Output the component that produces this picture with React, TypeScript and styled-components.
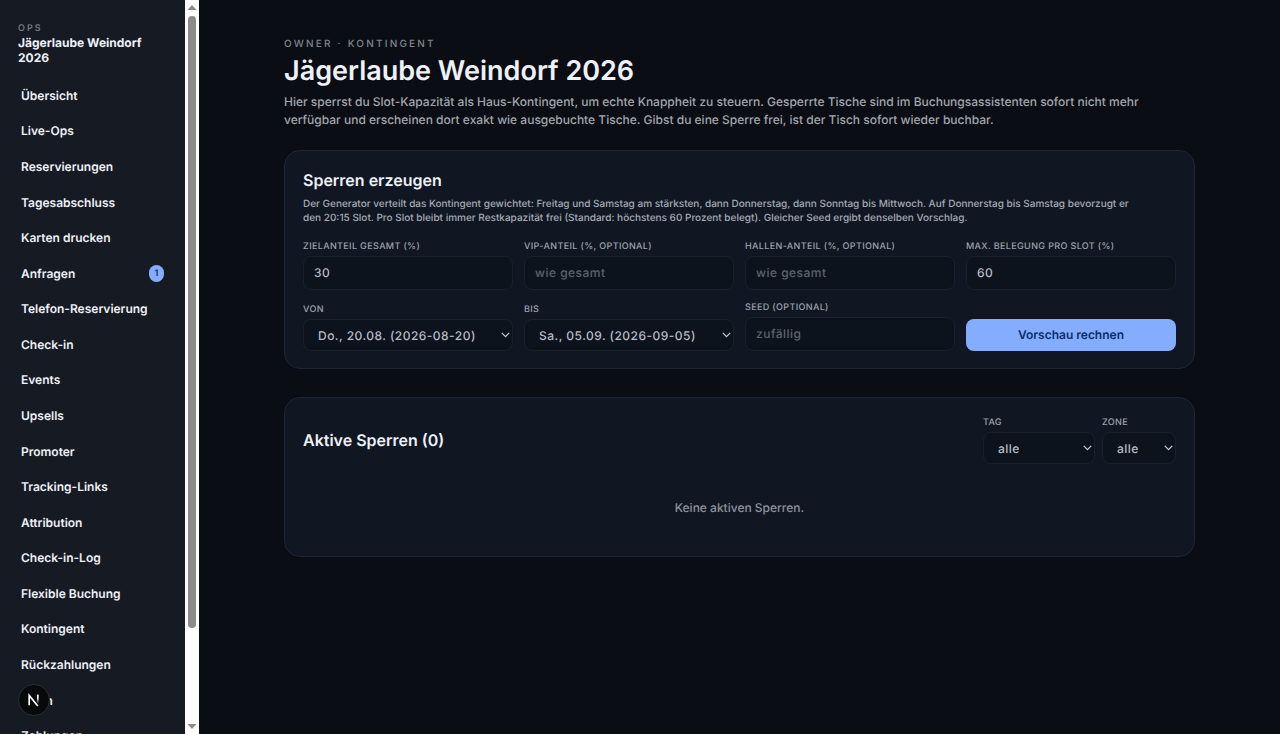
import React, { useId } from "react";
import styled, { createGlobalStyle, css } from "styled-components";

const GlobalStyle = createGlobalStyle`
  *, *::before, *::after { box-sizing: border-box; }
  body {
    margin: 0;
    background: #0a0e14;
    color: #eef1f7;
    font-family: Inter, "Liberation Sans", sans-serif;
    text-rendering: geometricPrecision;
    -webkit-font-smoothing: antialiased;
  }
  h1, h2, p { margin: 0; }
`;

const Shell = styled.div`
  display: flex;
  align-items: flex-start;
  min-height: 100vh;
`;

const SidebarFrame = styled.div`
  position: sticky;
  top: 0;
  display: flex;
  flex: 0 0 199px;
  height: 100vh;
  overflow: hidden;
`;

const Sidebar = styled.aside`
  flex: 1;
  padding: 22px 18px 0;
  background: #161a23;
  overflow: hidden;
`;

const SidebarEyebrow = styled.p`
  font-size: 9px;
  line-height: 13px;
  font-weight: 500;
  letter-spacing: 0.22em;
  color: #80848c;
`;

const SidebarTitle = styled.p`
  font-size: 12px;
  line-height: 15px;
  font-weight: 700;
`;

const Nav = styled.nav`
  display: grid;
  grid-template-rows: repeat(19, 1fr);
  height: 676px;
  margin-top: 13px;
`;

const NavLink = styled.a`
  display: flex;
  align-items: center;
  justify-content: space-between;
  padding: 0 3px;
  font-size: 12px;
  line-height: 18px;
  font-weight: 600;
  color: #eef1f7;
  text-decoration: none;
  white-space: nowrap;
`;

const CountBadge = styled.span`
  min-width: 15px;
  padding: 0 5px;
  border-radius: 9px;
  background: #85adff;
  color: #0a2d68;
  font-size: 9px;
  line-height: 17px;
  font-weight: 600;
  text-align: center;
`;

const ScrollTrack = styled.div`
  display: flex;
  flex: 0 0 14px;
  flex-direction: column;
  align-items: center;
  justify-content: space-between;
  padding: 5px 0;
  background: #fdfdfd;
  svg { display: block; flex: none; }
`;

const ScrollSpace = styled.div`
  flex: 1;
  width: 8px;
  padding: 6px 0 4px;
`;

const ScrollThumb = styled.div`
  height: 87%;
  border-radius: 4px;
  background: #8b8b8b;
`;

const Main = styled.main`
  flex: 1;
  min-width: 0;
  padding: 37px 24px;
`;

const Content = styled.div`
  max-width: 911px;
  margin: 0 auto;
`;

const Eyebrow = styled.p`
  font-size: 10px;
  line-height: 14px;
  font-weight: 500;
  letter-spacing: 0.22em;
  text-transform: uppercase;
  color: #80848c;
`;

const PageTitle = styled.h1`
  margin-top: 3px;
  font-size: 27px;
  line-height: 34px;
  font-weight: 600;
`;

const Lead = styled.p`
  max-width: 890px;
  margin-top: 5px;
  font-size: 12px;
  line-height: 18px;
  font-weight: 500;
  color: #a3a6ad;
`;

const Card = styled.section`
  margin-top: 21px;
  padding: 17px 18px;
  border: 1px solid #1c2636;
  border-radius: 16px;
  background: #101723;
  & + & { margin-top: 28px; }
`;

const CardTitle = styled.h2`
  font-size: 16px;
  line-height: 24px;
  font-weight: 600;
`;

const CardText = styled.p`
  max-width: 840px;
  margin-top: 5px;
  font-size: 10px;
  line-height: 14px;
  font-weight: 500;
  color: #a6abb5;
`;

const FormGrid = styled.form`
  display: grid;
  grid-template-columns: repeat(4, minmax(0, 1fr));
  align-items: end;
  gap: 11px;
  margin-top: 15px;
`;

const FieldBox = styled.div`
  display: flex;
  flex-direction: column;
  gap: 3px;
`;

const FieldLabel = styled.label`
  font-size: 9px;
  line-height: 13px;
  font-weight: 500;
  letter-spacing: 0.04em;
  text-transform: uppercase;
  color: #9da2ad;
`;

const control = css`
  width: 100%;
  border: 1px solid #19212d;
  border-radius: 8px;
  background: #0d131d;
  color: #b9bdc6;
  font-family: inherit;
  font-size: 12px;
  font-weight: 500;
  letter-spacing: 0.04em;
  text-rendering: inherit;
`;

const TextInput = styled.input`
  ${control}
  height: 34px;
  padding: 0 10px 2px;
  &::placeholder { color: #5d636e; }
`;

const SelectBox = styled.div<{ $width?: number }>`
  position: relative;
  width: ${(p) => (p.$width ? `${p.$width}px` : "100%")};
  svg {
    position: absolute;
    top: 13px;
    right: 3px;
    pointer-events: none;
  }
`;

const SelectInput = styled.select`
  ${control}
  display: block;
  appearance: none;
  height: 32px;
  padding: 0 14px;
`;

const SubmitButton = styled.button`
  height: 32px;
  padding: 0 10px 2px;
  border: 0;
  border-radius: 8px;
  background: #85adff;
  color: #0a2d68;
  font-family: inherit;
  font-size: 12px;
  font-weight: 600;
  text-rendering: inherit;
`;

const CardHeader = styled.div`
  display: flex;
  align-items: center;
  justify-content: space-between;
  padding-top: 1px;
`;

const Filters = styled.div`
  display: flex;
  gap: 7px;
`;

const EmptyState = styled.p`
  padding: 35px 0 22px;
  font-size: 12px;
  line-height: 18px;
  font-weight: 500;
  text-align: center;
  color: #8f949e;
`;

const DevBadge = styled.button`
  position: fixed;
  left: 18px;
  bottom: 18px;
  display: grid;
  place-items: center;
  width: 32px;
  height: 32px;
  padding: 0;
  border: 1px solid #2c2d30;
  border-radius: 50%;
  background: #08090b;
`;

const navItems: { label: string; count?: number }[] = [
  { label: "Übersicht" },
  { label: "Live-Ops" },
  { label: "Reservierungen" },
  { label: "Tagesabschluss" },
  { label: "Karten drucken" },
  { label: "Anfragen", count: 1 },
  { label: "Telefon-Reservierung" },
  { label: "Check-in" },
  { label: "Events" },
  { label: "Upsells" },
  { label: "Promoter" },
  { label: "Tracking-Links" },
  { label: "Attribution" },
  { label: "Check-in-Log" },
  { label: "Flexible Buchung" },
  { label: "Kontingent" },
  { label: "Rückzahlungen" },
  { label: "Team" },
  { label: "Zahlungen" },
];

function TextField(props: { label: string; value?: string; placeholder?: string }) {
  const id = useId();
  return (
    <FieldBox>
      <FieldLabel htmlFor={id}>{props.label}</FieldLabel>
      <TextInput id={id} defaultValue={props.value} placeholder={props.placeholder} />
    </FieldBox>
  );
}

function SelectField(props: { label: string; option: string; width?: number }) {
  const id = useId();
  return (
    <FieldBox>
      <FieldLabel htmlFor={id}>{props.label}</FieldLabel>
      <SelectBox $width={props.width}>
        <SelectInput id={id}>
          <option>{props.option}</option>
        </SelectInput>
        <svg width="9" height="6" viewBox="0 0 9 6" fill="none" aria-hidden="true">
          <path d="M0.8 0.9L4.5 4.6L8.2 0.9" stroke="#c3c7cf" strokeWidth="1.3" />
        </svg>
      </SelectBox>
    </FieldBox>
  );
}

export default function App() {
  return (
    <>
      <GlobalStyle />
      <Shell>
        <SidebarFrame>
          <Sidebar>
            <SidebarEyebrow>OPS</SidebarEyebrow>
            <SidebarTitle>Jägerlaube Weindorf 2026</SidebarTitle>
            <Nav>
              {navItems.map((item) => (
                <NavLink key={item.label} href="#">
                  {item.label}
                  {item.count && <CountBadge>{item.count}</CountBadge>}
                </NavLink>
              ))}
            </Nav>
          </Sidebar>
          <ScrollTrack aria-hidden="true">
            <svg width="10" height="5" viewBox="0 0 10 5">
              <path d="M5 0L9.5 5H0.5Z" fill="#8b8b8b" />
            </svg>
            <ScrollSpace>
              <ScrollThumb />
            </ScrollSpace>
            <svg width="10" height="5" viewBox="0 0 10 5">
              <path d="M5 5L9.5 0H0.5Z" fill="#8b8b8b" />
            </svg>
          </ScrollTrack>
        </SidebarFrame>
        <Main>
          <Content>
            <Eyebrow>Owner · Kontingent</Eyebrow>
            <PageTitle>Jägerlaube Weindorf 2026</PageTitle>
            <Lead>
              Hier sperrst du Slot-Kapazität als Haus-Kontingent, um echte Knappheit zu steuern. Gesperrte Tische sind
              im Buchungsassistenten sofort nicht mehr verfügbar und erscheinen dort exakt wie ausgebuchte Tische.
              Gibst du eine Sperre frei, ist der Tisch sofort wieder buchbar.
            </Lead>
            <Card>
              <CardTitle>Sperren erzeugen</CardTitle>
              <CardText>
                Der Generator verteilt das Kontingent gewichtet: Freitag und Samstag am stärksten, dann Donnerstag,
                dann Sonntag bis Mittwoch. Auf Donnerstag bis Samstag bevorzugt er den 20:15 Slot. Pro Slot bleibt
                immer Restkapazität frei (Standard: höchstens 60 Prozent belegt). Gleicher Seed ergibt denselben
                Vorschlag.
              </CardText>
              <FormGrid onSubmit={(e) => e.preventDefault()}>
                <TextField label="Zielanteil gesamt (%)" value="30" />
                <TextField label="VIP-Anteil (%, optional)" placeholder="wie gesamt" />
                <TextField label="Hallen-Anteil (%, optional)" placeholder="wie gesamt" />
                <TextField label="Max. Belegung pro Slot (%)" value="60" />
                <SelectField label="Von" option="Do., 20.08. (2026-08-20)" />
                <SelectField label="Bis" option="Sa., 05.09. (2026-09-05)" />
                <TextField label="Seed (optional)" placeholder="zufällig" />
                <SubmitButton type="submit">Vorschau rechnen</SubmitButton>
              </FormGrid>
            </Card>
            <Card>
              <CardHeader>
                <CardTitle>Aktive Sperren (0)</CardTitle>
                <Filters>
                  <SelectField label="Tag" option="alle" width={112} />
                  <SelectField label="Zone" option="alle" width={74} />
                </Filters>
              </CardHeader>
              <EmptyState>Keine aktiven Sperren.</EmptyState>
            </Card>
          </Content>
        </Main>
      </Shell>
      <DevBadge type="button" aria-label="Next.js">
        <svg width="14" height="14" viewBox="0 0 14 14" fill="none">
          <defs>
            <linearGradient id="stem" x1="0" y1="1" x2="0" y2="11" gradientUnits="userSpaceOnUse">
              <stop offset="0.4" stopColor="#fff" />
              <stop offset="1" stopColor="#fff" stopOpacity="0" />
            </linearGradient>
          </defs>
          <path d="M2.2 12.2V2.4L10.8 13" stroke="#fff" strokeWidth="1.7" />
          <path d="M10.8 1.6V10" stroke="url(#stem)" strokeWidth="1.7" />
        </svg>
      </DevBadge>
    </>
  );
}
